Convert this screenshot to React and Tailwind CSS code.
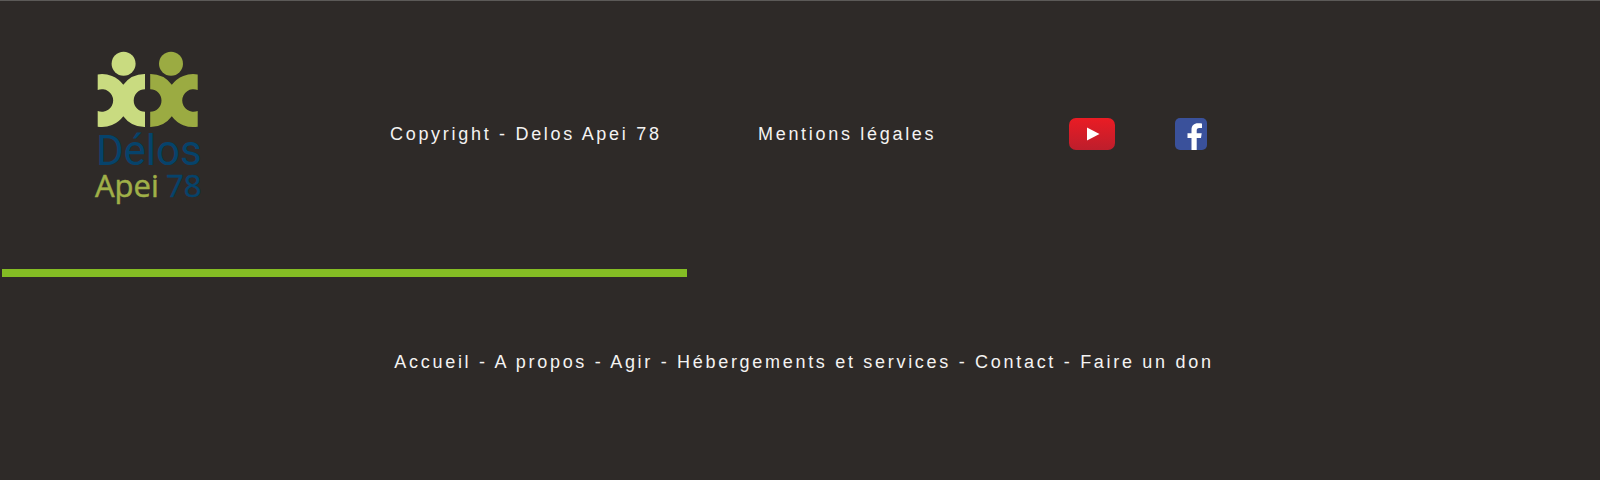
import React, { Fragment } from "react";

const links = [
  "Accueil",
  "A propos",
  "Agir",
  "Hébergements et services",
  "Contact",
  "Faire un don",
];

function Logo() {
  return (
    <svg
      viewBox="90 44 116 180"
      className="h-[180px] w-[116px] tracking-normal"
      role="img"
      aria-label="Délos Apei 78"
    >
      <g fill="#c9db80">
        <circle cx="123.6" cy="63.7" r="12" />
        <path d="M97.7 74.4A26.5 26.5 0 0 1 123.3 84.8A26.5 26.5 0 0 1 145 74V89.2A11.3 11.3 0 0 0 145 111.8V127A26.5 26.5 0 0 1 123.3 116.2A26.5 26.5 0 0 1 97.7 126.7V111A11.3 11.3 0 1 0 97.7 90Z" />
      </g>
      <g fill="#9bab42">
        <circle cx="171" cy="63.7" r="12" />
        <path d="M150.2 74A26.5 26.5 0 0 1 171.8 84.8A26.5 26.5 0 0 1 197.7 74.4V90A11.3 11.3 0 1 0 197.7 111V126.7A26.5 26.5 0 0 1 171.8 116.2A26.5 26.5 0 0 1 150.2 127V111.8A11.3 11.3 0 0 0 150.2 89.2Z" />
      </g>
      <g fontFamily="'Open Sans', 'Noto Sans', sans-serif" strokeWidth="0.5">
        <text x="96" y="165" fontSize="42" fontFamily="Roboto, sans-serif" fill="#06436b">
          Délos
        </text>
        <text x="95" y="197" fontSize="31" fill="#a0b048" stroke="#a0b048">Apei</text>
        <text x="166" y="197" fontSize="31" fill="#06436b" stroke="#06436b">78</text>
      </g>
    </svg>
  );
}

function YouTubeIcon() {
  return (
    <svg viewBox="0 0 46 32" className="h-8 w-[46px]" aria-hidden="true">
      <defs>
        <linearGradient id="yt" x1="0" y1="0" x2="0" y2="1">
          <stop offset="0" stopColor="#ea1c24" />
          <stop offset="1" stopColor="#bd1e2c" />
        </linearGradient>
      </defs>
      <rect width="46" height="32" rx="7" fill="url(#yt)" />
      <path d="M18 9.5L30.500 16L18 22.500Z" fill="#fff" />
    </svg>
  );
}

function FacebookIcon() {
  return (
    <svg viewBox="0 0 32 32" className="size-8" aria-hidden="true">
      <rect width="32" height="32" rx="5" fill="#3a519b" />
      <path
        d="M16.500 32V20H12.500V15.200H16.500V12C16.500 7.500 19 5.300 23 5.300C24.800 5.300 26.300 5.400 27 5.500V10H24.300C22.200 10 21.700 11 21.700 12.600V15.200H26.700L26 20H21.700V32Z"
        fill="#fff"
      />
    </svg>
  );
}

export default function App() {
  return (
    <footer className="min-h-screen border-t border-[#5c5a58] bg-[#2e2a28] font-['Liberation_Sans',Arial,sans-serif] text-lg leading-6 tracking-[0.15em] text-[#f4f3f2]">
      <div className="grid grid-cols-[390fr_368fr_311fr_531fr] items-center pt-[43px] pb-[45px]">
        <a href="#accueil" className="ml-[23%] justify-self-start">
          <Logo />
        </a>
        <p className="whitespace-nowrap">Copyright - Delos Apei 78</p>
        <a href="#mentions" className="whitespace-nowrap">Mentions légales</a>
        <div className="flex items-center gap-[60px]">
          <a href="#youtube" aria-label="YouTube"><YouTubeIcon /></a>
          <a href="#facebook" aria-label="Facebook"><FacebookIcon /></a>
        </div>
      </div>
      <div className="ml-0.5 h-2 w-[42.8%] bg-[#84bd24]" />
      <nav aria-label="Pied de page" className="pt-[73px] pr-4 pb-12 pl-6 text-center">
        {links.map((label, i) => (
          <Fragment key={label}>
            {i > 0 && " - "}
            <a href="#menu">{label}</a>
          </Fragment>
        ))}
      </nav>
    </footer>
  );
}
